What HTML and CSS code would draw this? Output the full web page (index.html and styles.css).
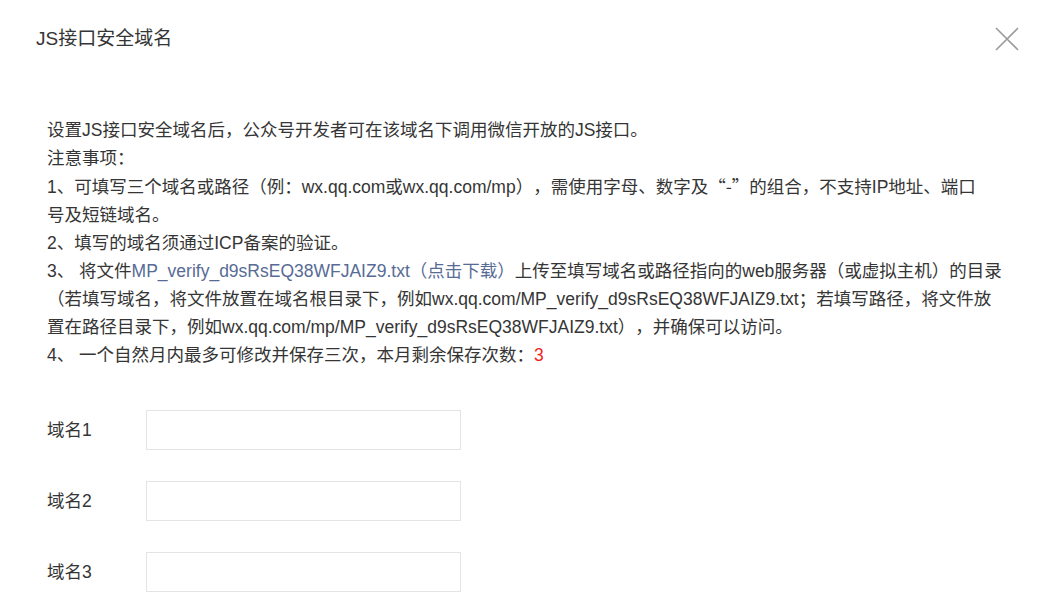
FILE: index.html
```html
<!DOCTYPE html>
<html lang="zh-CN">
<head>
<meta charset="utf-8">
<title>JS接口安全域名</title>
<link rel="stylesheet" href="styles.css">
</head>
<body>
<div class="dialog">
  <div class="hd">
    <h3 class="title">JS接口安全域名</h3>
    <a class="close" href="#" aria-label="关闭">
      <svg width="24" height="24" viewBox="0 0 24 24"><path d="M1 1 L23 23 M23 1 L1 23" stroke="#9a9a9a" stroke-width="1.6" fill="none"/></svg>
    </a>
  </div>
  <div class="bd">
    <div class="tips">
      <p>设置JS接口安全域名后，公众号开发者可在该域名下调用微信开放的JS接口。</p>
      <p>注意事项：</p>
      <p>1、可填写三个域名或路径（例：wx.qq.com或wx.qq.com/mp），需使用字母、数字及<span class="cjk">“-”</span>的组合，不支持IP地址、端口<br>号及短链域名。</p>
      <p>2、填写的域名须通过ICP备案的验证。</p>
      <p>3、 将文件<a class="link" href="#">MP_verify_d9sRsEQ38WFJAIZ9.txt（点击下载）</a>上传至填写域名或路径指向的web服务器（或虚拟主机）的目录（若填写域名，将文件放置在域名根目录下，例如wx.qq.com/MP_verify_d9sRsEQ38WFJAIZ9.txt；若填写路径，将文件放置在路径目录下，例如wx.qq.com/mp/MP_verify_d9sRsEQ38WFJAIZ9.txt），并确保可以访问。</p>
      <p>4、 一个自然月内最多可修改并保存三次，本月剩余保存次数：<span class="warn">3</span></p>
    </div>
    <div class="form">
      <div class="row"><label class="label">域名1</label><input class="input" type="text"></div>
      <div class="row"><label class="label">域名2</label><input class="input" type="text"></div>
      <div class="row"><label class="label">域名3</label><input class="input" type="text"></div>
    </div>
  </div>
</div>
</body>
</html>
```
FILE: styles.css
```css
html, body {
  margin: 0;
  padding: 0;
  background: #fff;
}
body {
  font-family: "Liberation Sans", "Noto Sans CJK SC", sans-serif;
  color: #353535;
  font-size: 17.5px;
  text-spacing-trim: space-all;
}
.dialog {
  width: 1038px;
}
.hd {
  display: flex;
  align-items: center;
  justify-content: space-between;
  padding: 25px 19px 0 36px;
  height: 28px;
}
.title {
  margin: 0;
  font-size: 19px;
  font-weight: normal;
  line-height: 28px;
  color: #353535;
}
.close {
  display: block;
  width: 24px;
  height: 24px;
}
.close svg {
  display: block;
}
.bd {
  padding: 63px 0 0 47px;
}
.tips {
  width: 958px;
  line-height: 28px;
}
.tips p {
  margin: 0;
}
.cjk {
  font-family: "Noto Sans CJK SC", sans-serif;
}
.link {
  color: #576b95;
  text-decoration: none;
}
.warn {
  color: #f01e1e;
}
.form {
  padding-top: 41px;
  display: flex;
  flex-direction: column;
  gap: 31px;
}
.row {
  display: flex;
  align-items: center;
  height: 40px;
}
.label {
  width: 99px;
  font-size: 17.5px;
  line-height: 24px;
  padding-bottom: 1px;
  color: #353535;
}
.input {
  box-sizing: border-box;
  width: 315px;
  height: 40px;
  margin: 0;
  border: 1px solid #e4e4e4;
  border-radius: 0;
  padding: 0 10px;
  outline: none;
  font-family: inherit;
  font-size: 17px;
}
```
